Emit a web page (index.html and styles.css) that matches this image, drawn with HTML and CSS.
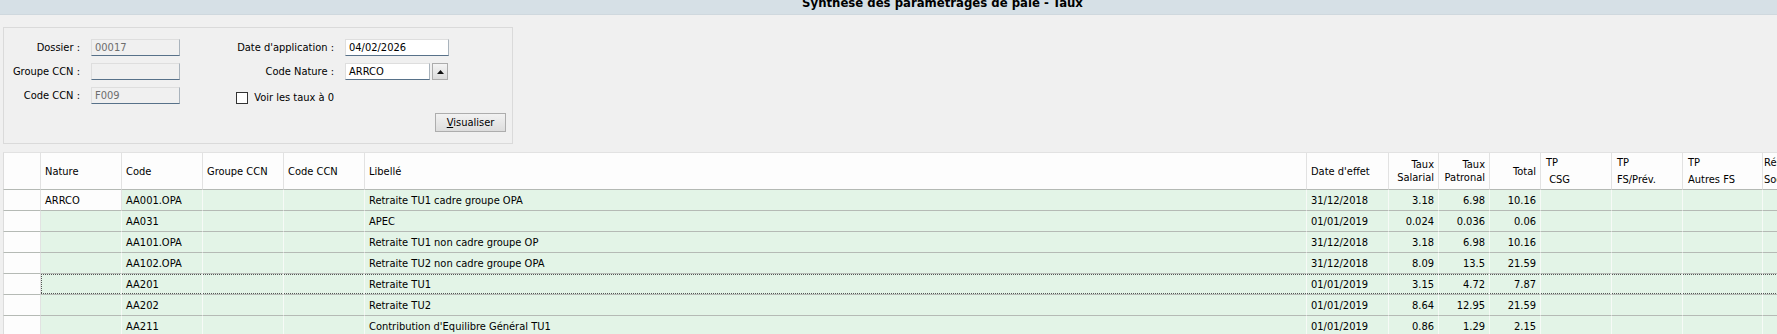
FILE: index.html
```html
<!DOCTYPE html>
<html lang="fr">
<head>
    <meta charset="UTF-8">
    <title>Synthese des parametrages de paie - Taux</title>
    <link rel="stylesheet" href="styles.css">
</head>
<body>
    <div class="titlebar"><h1>Synthese des parametrages de paie - Taux</h1></div>

    <div class="criteria">
        <div class="fields">
            <div class="form-grid left">
                <label>Dossier :</label>
                <div class="field disabled">00017</div>
                <label>Groupe CCN :</label>
                <div class="field disabled"></div>
                <label>Code CCN :</label>
                <div class="field disabled">F009</div>
            </div>
            <div class="form-grid right">
                <label>Date d'application :</label>
                <div class="field">04/02/2026</div>
                <label>Code Nature :</label>
                <div class="combo">
                    <div class="field">ARRCO</div>
                    <div class="arrow-btn">
                        <svg width="7" height="4" viewBox="0 0 7 4"><path d="M0 4 L3.5 0 L7 4 Z" fill="#111"/></svg>
                    </div>
                </div>
                <div class="check-row">
                    <span class="checkbox"></span>
                    <span>Voir les taux à 0</span>
                </div>
            </div>
        </div>
        <div class="actions">
            <button class="btn"><u>V</u>isualiser</button>
        </div>
    </div>

    <table class="grid">
        <thead>
            <tr>
                <th class="sel w-sel"></th>
                <th class="w-nat">Nature</th>
                <th class="w-nat">Code</th>
                <th class="w-nat">Groupe CCN</th>
                <th class="w-nat">Code CCN</th>
                <th class="w-lib">Libellé</th>
                <th class="w-date">Date d'effet</th>
                <th class="num two w-tsal">Taux<br>Salarial</th>
                <th class="num two w-tpat">Taux<br>Patronal</th>
                <th class="num w-tpat">Total</th>
                <th class="tp w-tp">TP<br>&nbsp;CSG</th>
                <th class="tp w-tp">TP<br>FS/Prév.</th>
                <th class="tp w-tp2">TP<br>Autres FS</th>
                <th class="tp last w-tp2">Réintégration<br>Sociale</th>
            </tr>
        </thead>
        <tbody>
            <tr>
                <td class="sel"></td><td class="sel">ARRCO</td><td>AA001.OPA</td><td></td><td></td>
                <td>Retraite TU1 cadre groupe OPA</td><td>31/12/2018</td>
                <td class="num">3.18</td><td class="num">6.98</td><td class="num">10.16</td>
                <td></td><td></td><td></td><td></td>
            </tr>
            <tr>
                <td class="sel"></td><td></td><td>AA031</td><td></td><td></td>
                <td>APEC</td><td>01/01/2019</td>
                <td class="num">0.024</td><td class="num">0.036</td><td class="num">0.06</td>
                <td></td><td></td><td></td><td></td>
            </tr>
            <tr>
                <td class="sel"></td><td></td><td>AA101.OPA</td><td></td><td></td>
                <td>Retraite TU1 non cadre groupe OP</td><td>31/12/2018</td>
                <td class="num">3.18</td><td class="num">6.98</td><td class="num">10.16</td>
                <td></td><td></td><td></td><td></td>
            </tr>
            <tr>
                <td class="sel"></td><td></td><td>AA102.OPA</td><td></td><td></td>
                <td>Retraite TU2 non cadre groupe OPA</td><td>31/12/2018</td>
                <td class="num">8.09</td><td class="num">13.5</td><td class="num">21.59</td>
                <td></td><td></td><td></td><td></td>
            </tr>
            <tr class="focus">
                <td class="sel"></td><td class="first"></td><td>AA201</td><td></td><td></td>
                <td>Retraite TU1</td><td>01/01/2019</td>
                <td class="num">3.15</td><td class="num">4.72</td><td class="num">7.87</td>
                <td></td><td></td><td></td><td></td>
            </tr>
            <tr>
                <td class="sel"></td><td></td><td>AA202</td><td></td><td></td>
                <td>Retraite TU2</td><td>01/01/2019</td>
                <td class="num">8.64</td><td class="num">12.95</td><td class="num">21.59</td>
                <td></td><td></td><td></td><td></td>
            </tr>
            <tr>
                <td class="sel"></td><td></td><td>AA211</td><td></td><td></td>
                <td>Contribution d'Equilibre Général TU1</td><td>01/01/2019</td>
                <td class="num">0.86</td><td class="num">1.29</td><td class="num">2.15</td>
                <td></td><td></td><td></td><td></td>
            </tr>
        </tbody>
    </table>
</body>
</html>
```

FILE: styles.css
```css
* {
    box-sizing: border-box;
}
html, body {
    overflow: hidden;
}
body {
    margin: 0;
    width: 1777px;
    height: 334px;
    background: #f0f0f0;
    color: #000;
    font-family: "DejaVu Sans Condensed", "DejaVu Sans", Tahoma, sans-serif;
    font-size: 11px;
}
.titlebar {
    height: 15px;
    background: #d6e0e6;
    border-bottom: 1px solid #cfd8de;
    overflow: hidden;
}
.titlebar h1 {
    margin: -4px 0 0 0;
    padding-left: 108px;
    text-align: center;
    font-size: 13px;
    line-height: 13px;
    font-weight: bold;
}

/* criteria panel */
.criteria {
    margin: 12px 0 0 3px;
    width: 510px;
    height: 117px;
    border: 1px solid #dadada;
    padding: 11px 6px 0 0;
}
.fields {
    display: flex;
}
.form-grid {
    display: grid;
    grid-auto-rows: 17px;
    row-gap: 7px;
    column-gap: 11px;
    align-items: center;
}
.form-grid.left {
    grid-template-columns: 76px 89px;
}
.form-grid.right {
    margin-left: 20px;
    grid-template-columns: 134px 104px;
}
.form-grid label {
    text-align: right;
    white-space: nowrap;
}
.field {
    height: 17px;
    line-height: 15px;
    padding: 0 3px;
    background: #fff;
    border: 1px solid;
    border-color: #dedede #a9b3bc #577189 #dedede;
    white-space: nowrap;
}
.field.disabled {
    background: #f0f0f0;
    color: #6d6d6d;
}
.combo {
    display: flex;
    gap: 2px;
}
.combo .field {
    width: 85px;
}
.arrow-btn {
    width: 16px;
    height: 17px;
    display: flex;
    align-items: center;
    justify-content: center;
    background: linear-gradient(#f4f4f4, #dcdcdc);
    border: 1px solid #acacac;
}
.check-row {
    grid-column: 1;
    justify-self: end;
    align-self: end;
    display: flex;
    align-items: center;
    gap: 6px;
    height: 13px;
}
.checkbox {
    width: 12px;
    height: 12px;
    background: #fff;
    border: 1px solid #333;
}
.actions {
    display: flex;
    justify-content: flex-end;
    margin-top: 9px;
}
.btn {
    width: 71px;
    height: 19px;
    padding: 0;
    font: inherit;
    color: #000;
    background: linear-gradient(#f2f2f2, #dddddd);
    border: 1px solid #adadad;
}

/* result grid */
.grid {
    margin: 8px 0 0 3px;
    border-collapse: separate;
    border-spacing: 0;
    table-layout: fixed;
    width: 1840px;
}
.grid th {
    height: 38px;
    padding: 0 4px;
    background: #fdfdfd;
    border-top: 1px solid #e2e2e2;
    border-right: 1px solid #e2e2e2;
    border-bottom: 1px solid #b4b9b4;
    font-weight: normal;
    text-align: left;
    vertical-align: middle;
    line-height: 13px;
    white-space: nowrap;
    overflow: hidden;
}
.grid td {
    height: 21px;
    padding: 0 4px;
    background: #e3f4e7;
    border-right: 1px solid #f6faf6;
    border-bottom: 1px solid #b5bab5;
    white-space: nowrap;
    overflow: hidden;
}
.grid .sel {
    background: #fdfdfd;
    border-right-color: #e2e2e2;
}
.grid th.sel,
.grid td:first-child {
    border-left: 1px solid #dcdcdc;
}
.grid .num {
    text-align: right;
}
.grid th.tp {
    padding-left: 5px;
    line-height: 17px;
}
.grid th.last {
    padding-left: 1px;
}
.w-sel { width: 38px; }
.w-nat { width: 81px; }
.w-lib { width: 942px; }
.w-date { width: 82px; }
.w-tsal { width: 50px; }
.w-tpat { width: 51px; }
.w-tp { width: 71px; }
.w-tp2 { width: 80px; }

.focus td:not(.sel) {
    background-image:
        linear-gradient(to right, #555 50%, transparent 50%),
        linear-gradient(to right, #555 50%, transparent 50%);
    background-size: 2px 1px, 2px 1px;
    background-position: left top, left bottom;
    background-repeat: repeat-x;
}
.focus td.first {
    background-image:
        linear-gradient(to right, #555 50%, transparent 50%),
        linear-gradient(to right, #555 50%, transparent 50%),
        linear-gradient(to bottom, #555 50%, transparent 50%);
    background-size: 2px 1px, 2px 1px, 1px 2px;
    background-position: left top, left bottom, left top;
    background-repeat: repeat-x, repeat-x, repeat-y;
}
```
